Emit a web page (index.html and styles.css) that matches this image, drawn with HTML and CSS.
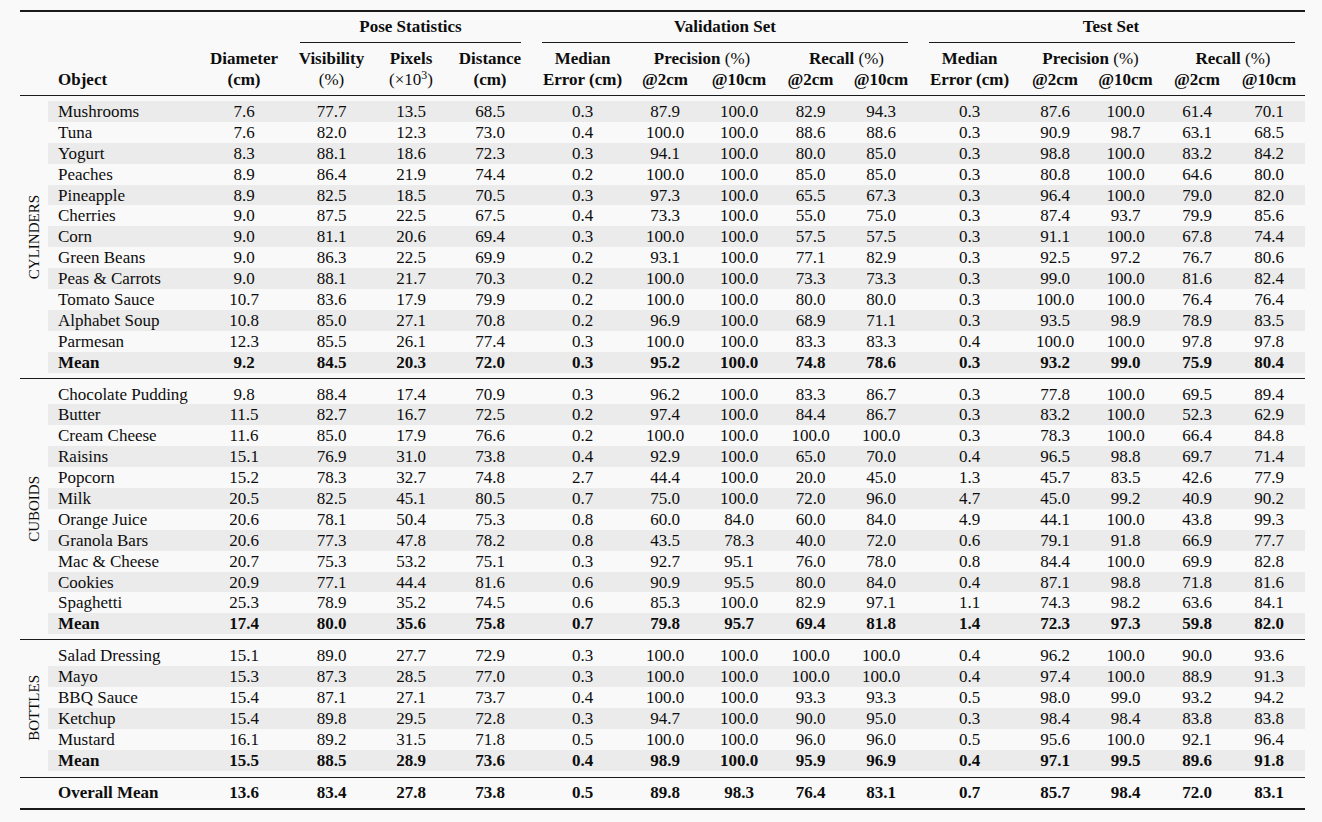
FILE: index.html
```html
<!DOCTYPE html>
<html>
<head>
<meta charset="utf-8">
<title>Results table</title>
<link rel="stylesheet" href="styles.css">
</head>
<body>
<div class="page">
<div class="table">
  <div class="head1 cols">
    <div class="group g-pose">Pose Statistics<span class="cmid cm-pose"></span></div>
    <div class="group g-val">Validation Set<span class="cmid cm-val"></span></div>
    <div class="group g-test">Test Set<span class="cmid cm-test"></span></div>
  </div>
  <div class="head2 cols">
    <div class="h obj-h c1 r2">Object</div>
    <div class="h c2 r12">Diameter<br>(cm)</div>
    <div class="h c3 r12">Visibility<br><span class="n">(%)</span></div>
    <div class="h c4 r12">Pixels<br><span class="n">(×10<sup>3</sup>)</span></div>
    <div class="h c5 r12">Distance<br>(cm)</div>
    <div class="h c6 r12 med-v">Median<br>Error (cm)</div>
    <div class="h c7s r1">Precision <span class="n">(%)</span></div>
    <div class="h c7 r2">@2cm</div>
    <div class="h c8 r2">@10cm</div>
    <div class="h c9s r1">Recall <span class="n">(%)</span></div>
    <div class="h c9 r2">@2cm</div>
    <div class="h c10 r2">@10cm</div>
    <div class="h c11 r12 med-t">Median<br>Error (cm)</div>
    <div class="h c12s r1">Precision <span class="n">(%)</span></div>
    <div class="h c12 r2">@2cm</div>
    <div class="h c13 r2">@10cm</div>
    <div class="h c14s r1">Recall <span class="n">(%)</span></div>
    <div class="h c14 r2">@2cm</div>
    <div class="h c15 r2">@10cm</div>
  </div>

  <div class="sec">
    <div class="label"><span>CYLINDERS</span></div>
    <div class="rows">
      <div class="row cols s"><span>Mushrooms</span><span>7.6</span><span>77.7</span><span>13.5</span><span>68.5</span><span>0.3</span><span>87.9</span><span>100.0</span><span>82.9</span><span>94.3</span><span>0.3</span><span>87.6</span><span>100.0</span><span>61.4</span><span>70.1</span></div>
      <div class="row cols"><span>Tuna</span><span>7.6</span><span>82.0</span><span>12.3</span><span>73.0</span><span>0.4</span><span>100.0</span><span>100.0</span><span>88.6</span><span>88.6</span><span>0.3</span><span>90.9</span><span>98.7</span><span>63.1</span><span>68.5</span></div>
      <div class="row cols s"><span>Yogurt</span><span>8.3</span><span>88.1</span><span>18.6</span><span>72.3</span><span>0.3</span><span>94.1</span><span>100.0</span><span>80.0</span><span>85.0</span><span>0.3</span><span>98.8</span><span>100.0</span><span>83.2</span><span>84.2</span></div>
      <div class="row cols"><span>Peaches</span><span>8.9</span><span>86.4</span><span>21.9</span><span>74.4</span><span>0.2</span><span>100.0</span><span>100.0</span><span>85.0</span><span>85.0</span><span>0.3</span><span>80.8</span><span>100.0</span><span>64.6</span><span>80.0</span></div>
      <div class="row cols s"><span>Pineapple</span><span>8.9</span><span>82.5</span><span>18.5</span><span>70.5</span><span>0.3</span><span>97.3</span><span>100.0</span><span>65.5</span><span>67.3</span><span>0.3</span><span>96.4</span><span>100.0</span><span>79.0</span><span>82.0</span></div>
      <div class="row cols"><span>Cherries</span><span>9.0</span><span>87.5</span><span>22.5</span><span>67.5</span><span>0.4</span><span>73.3</span><span>100.0</span><span>55.0</span><span>75.0</span><span>0.3</span><span>87.4</span><span>93.7</span><span>79.9</span><span>85.6</span></div>
      <div class="row cols s"><span>Corn</span><span>9.0</span><span>81.1</span><span>20.6</span><span>69.4</span><span>0.3</span><span>100.0</span><span>100.0</span><span>57.5</span><span>57.5</span><span>0.3</span><span>91.1</span><span>100.0</span><span>67.8</span><span>74.4</span></div>
      <div class="row cols"><span>Green Beans</span><span>9.0</span><span>86.3</span><span>22.5</span><span>69.9</span><span>0.2</span><span>93.1</span><span>100.0</span><span>77.1</span><span>82.9</span><span>0.3</span><span>92.5</span><span>97.2</span><span>76.7</span><span>80.6</span></div>
      <div class="row cols s"><span>Peas &amp; Carrots</span><span>9.0</span><span>88.1</span><span>21.7</span><span>70.3</span><span>0.2</span><span>100.0</span><span>100.0</span><span>73.3</span><span>73.3</span><span>0.3</span><span>99.0</span><span>100.0</span><span>81.6</span><span>82.4</span></div>
      <div class="row cols"><span>Tomato Sauce</span><span>10.7</span><span>83.6</span><span>17.9</span><span>79.9</span><span>0.2</span><span>100.0</span><span>100.0</span><span>80.0</span><span>80.0</span><span>0.3</span><span>100.0</span><span>100.0</span><span>76.4</span><span>76.4</span></div>
      <div class="row cols s"><span>Alphabet Soup</span><span>10.8</span><span>85.0</span><span>27.1</span><span>70.8</span><span>0.2</span><span>96.9</span><span>100.0</span><span>68.9</span><span>71.1</span><span>0.3</span><span>93.5</span><span>98.9</span><span>78.9</span><span>83.5</span></div>
      <div class="row cols"><span>Parmesan</span><span>12.3</span><span>85.5</span><span>26.1</span><span>77.4</span><span>0.3</span><span>100.0</span><span>100.0</span><span>83.3</span><span>83.3</span><span>0.4</span><span>100.0</span><span>100.0</span><span>97.8</span><span>97.8</span></div>
      <div class="row cols s b"><span>Mean</span><span>9.2</span><span>84.5</span><span>20.3</span><span>72.0</span><span>0.3</span><span>95.2</span><span>100.0</span><span>74.8</span><span>78.6</span><span>0.3</span><span>93.2</span><span>99.0</span><span>75.9</span><span>80.4</span></div>
    </div>
  </div>

  <div class="sec">
    <div class="label"><span>CUBOIDS</span></div>
    <div class="rows">
      <div class="row cols"><span>Chocolate Pudding</span><span>9.8</span><span>88.4</span><span>17.4</span><span>70.9</span><span>0.3</span><span>96.2</span><span>100.0</span><span>83.3</span><span>86.7</span><span>0.3</span><span>77.8</span><span>100.0</span><span>69.5</span><span>89.4</span></div>
      <div class="row cols s"><span>Butter</span><span>11.5</span><span>82.7</span><span>16.7</span><span>72.5</span><span>0.2</span><span>97.4</span><span>100.0</span><span>84.4</span><span>86.7</span><span>0.3</span><span>83.2</span><span>100.0</span><span>52.3</span><span>62.9</span></div>
      <div class="row cols"><span>Cream Cheese</span><span>11.6</span><span>85.0</span><span>17.9</span><span>76.6</span><span>0.2</span><span>100.0</span><span>100.0</span><span>100.0</span><span>100.0</span><span>0.3</span><span>78.3</span><span>100.0</span><span>66.4</span><span>84.8</span></div>
      <div class="row cols s"><span>Raisins</span><span>15.1</span><span>76.9</span><span>31.0</span><span>73.8</span><span>0.4</span><span>92.9</span><span>100.0</span><span>65.0</span><span>70.0</span><span>0.4</span><span>96.5</span><span>98.8</span><span>69.7</span><span>71.4</span></div>
      <div class="row cols"><span>Popcorn</span><span>15.2</span><span>78.3</span><span>32.7</span><span>74.8</span><span>2.7</span><span>44.4</span><span>100.0</span><span>20.0</span><span>45.0</span><span>1.3</span><span>45.7</span><span>83.5</span><span>42.6</span><span>77.9</span></div>
      <div class="row cols s"><span>Milk</span><span>20.5</span><span>82.5</span><span>45.1</span><span>80.5</span><span>0.7</span><span>75.0</span><span>100.0</span><span>72.0</span><span>96.0</span><span>4.7</span><span>45.0</span><span>99.2</span><span>40.9</span><span>90.2</span></div>
      <div class="row cols"><span>Orange Juice</span><span>20.6</span><span>78.1</span><span>50.4</span><span>75.3</span><span>0.8</span><span>60.0</span><span>84.0</span><span>60.0</span><span>84.0</span><span>4.9</span><span>44.1</span><span>100.0</span><span>43.8</span><span>99.3</span></div>
      <div class="row cols s"><span>Granola Bars</span><span>20.6</span><span>77.3</span><span>47.8</span><span>78.2</span><span>0.8</span><span>43.5</span><span>78.3</span><span>40.0</span><span>72.0</span><span>0.6</span><span>79.1</span><span>91.8</span><span>66.9</span><span>77.7</span></div>
      <div class="row cols"><span>Mac &amp; Cheese</span><span>20.7</span><span>75.3</span><span>53.2</span><span>75.1</span><span>0.3</span><span>92.7</span><span>95.1</span><span>76.0</span><span>78.0</span><span>0.8</span><span>84.4</span><span>100.0</span><span>69.9</span><span>82.8</span></div>
      <div class="row cols s"><span>Cookies</span><span>20.9</span><span>77.1</span><span>44.4</span><span>81.6</span><span>0.6</span><span>90.9</span><span>95.5</span><span>80.0</span><span>84.0</span><span>0.4</span><span>87.1</span><span>98.8</span><span>71.8</span><span>81.6</span></div>
      <div class="row cols"><span>Spaghetti</span><span>25.3</span><span>78.9</span><span>35.2</span><span>74.5</span><span>0.6</span><span>85.3</span><span>100.0</span><span>82.9</span><span>97.1</span><span>1.1</span><span>74.3</span><span>98.2</span><span>63.6</span><span>84.1</span></div>
      <div class="row cols s b"><span>Mean</span><span>17.4</span><span>80.0</span><span>35.6</span><span>75.8</span><span>0.7</span><span>79.8</span><span>95.7</span><span>69.4</span><span>81.8</span><span>1.4</span><span>72.3</span><span>97.3</span><span>59.8</span><span>82.0</span></div>
    </div>
  </div>

  <div class="sec sec-last">
    <div class="label"><span>BOTTLES</span></div>
    <div class="rows">
      <div class="row cols"><span>Salad Dressing</span><span>15.1</span><span>89.0</span><span>27.7</span><span>72.9</span><span>0.3</span><span>100.0</span><span>100.0</span><span>100.0</span><span>100.0</span><span>0.4</span><span>96.2</span><span>100.0</span><span>90.0</span><span>93.6</span></div>
      <div class="row cols s"><span>Mayo</span><span>15.3</span><span>87.3</span><span>28.5</span><span>77.0</span><span>0.3</span><span>100.0</span><span>100.0</span><span>100.0</span><span>100.0</span><span>0.4</span><span>97.4</span><span>100.0</span><span>88.9</span><span>91.3</span></div>
      <div class="row cols"><span>BBQ Sauce</span><span>15.4</span><span>87.1</span><span>27.1</span><span>73.7</span><span>0.4</span><span>100.0</span><span>100.0</span><span>93.3</span><span>93.3</span><span>0.5</span><span>98.0</span><span>99.0</span><span>93.2</span><span>94.2</span></div>
      <div class="row cols s"><span>Ketchup</span><span>15.4</span><span>89.8</span><span>29.5</span><span>72.8</span><span>0.3</span><span>94.7</span><span>100.0</span><span>90.0</span><span>95.0</span><span>0.3</span><span>98.4</span><span>98.4</span><span>83.8</span><span>83.8</span></div>
      <div class="row cols"><span>Mustard</span><span>16.1</span><span>89.2</span><span>31.5</span><span>71.8</span><span>0.5</span><span>100.0</span><span>100.0</span><span>96.0</span><span>96.0</span><span>0.5</span><span>95.6</span><span>100.0</span><span>92.1</span><span>96.4</span></div>
      <div class="row cols s b"><span>Mean</span><span>15.5</span><span>88.5</span><span>28.9</span><span>73.6</span><span>0.4</span><span>98.9</span><span>100.0</span><span>95.9</span><span>96.9</span><span>0.4</span><span>97.1</span><span>99.5</span><span>89.6</span><span>91.8</span></div>
    </div>
  </div>

  <div class="overall">
    <div class="row cols b"><span>Overall Mean</span><span>13.6</span><span>83.4</span><span>27.8</span><span>73.8</span><span>0.5</span><span>89.8</span><span>98.3</span><span>76.4</span><span>83.1</span><span>0.7</span><span>85.7</span><span>98.4</span><span>72.0</span><span>83.1</span></div>
  </div>
</div>
</div>
</body>
</html>
```

FILE: styles.css
```css
html, body {
  margin: 0;
  padding: 0;
  background: #f9f9f9;
}

body {
  font-family: "Liberation Serif", "Times New Roman", serif;
  font-size: 17px;
  color: #0d0d0d;
}

.page {
  padding: 10px 0 0 20px;
  width: 1285px;
}

.table {
  border-top: 2px solid #1a1a1a;
  border-bottom: 2px solid #1a1a1a;
}

.cols {
  display: grid;
  grid-template-columns: 152px 88px 87px 72px 86px 95px 74px 74px 69px 72px 103px 70px 71px 72px 72px;
}

/* header row 1: group titles with trimmed rules */
.head1 {
  padding: 4px 0 0 28px;
}

.group {
  font-weight: bold;
  text-align: center;
  line-height: 21px;
}

.g-pose { grid-column: 3 / 6; }
.g-val { grid-column: 6 / 11; }
.g-test { grid-column: 11 / 16; }

.cmid {
  display: block;
  margin-top: 5px;
  border-top: 1px solid #1a1a1a;
}

.cm-pose { margin-left: 12px; margin-right: 12px; }
.cm-val { margin-left: 9px; margin-right: 9px; }
.cm-test { margin-left: 12px; margin-right: 10px; }

/* header row 2 */
.head2 {
  padding: 5px 0 5px 28px;
  grid-template-rows: 21px 21px;
  line-height: 21px;
  border-bottom: 1px solid #1a1a1a;
}

.h {
  font-weight: bold;
  text-align: center;
  white-space: nowrap;
}

.obj-h {
  text-align: left;
  padding-left: 10px;
}

.n { font-weight: normal; }

sup {
  font-size: 0.7em;
  vertical-align: 0.5em;
  line-height: 0;
}

.r1 { grid-row: 1; }
.r2 { grid-row: 2; }
.r12 { grid-row: 1 / 3; }

.c1 { grid-column: 1; }
.c2 { grid-column: 2; }
.c3 { grid-column: 3; }
.c4 { grid-column: 4; }
.c5 { grid-column: 5; }
.c6 { grid-column: 6; }
.c7 { grid-column: 7; }
.c8 { grid-column: 8; }
.c9 { grid-column: 9; }
.c10 { grid-column: 10; }
.c11 { grid-column: 11; }
.c12 { grid-column: 12; }
.c13 { grid-column: 13; }
.c14 { grid-column: 14; }
.c15 { grid-column: 15; }
.c7s { grid-column: 7 / 9; }
.c9s { grid-column: 9 / 11; }
.c12s { grid-column: 12 / 14; }
.c14s { grid-column: 14 / 16; }

.med-v { padding-left: 4px; }
.med-t { padding-left: 2px; }

/* body sections */
.sec {
  display: flex;
  padding: 5px 0;
  border-bottom: 1px solid #1a1a1a;
}

.sec-last {
  padding-bottom: 6px;
}

.label {
  width: 28px;
  flex: none;
  display: flex;
  align-items: center;
  justify-content: center;
}

.label span {
  writing-mode: vertical-rl;
  transform: rotate(180deg);
  font-size: 15px;
  line-height: 15px;
}

.rows {
  flex: 1;
}

.row {
  height: 20.9px;
  line-height: 18.9px;
}

.row.s {
  background: #ebebeb;
}

.row span {
  padding-top: 2px;
  text-align: center;
  white-space: nowrap;
}

.row span:first-child {
  text-align: left;
  padding-left: 10px;
}

.row span:nth-child(6) { padding-left: 4px; }
.row span:nth-child(11) { padding-left: 2px; }

.b { font-weight: bold; }

.overall {
  padding: 4px 0 5px 28px;
}
```
